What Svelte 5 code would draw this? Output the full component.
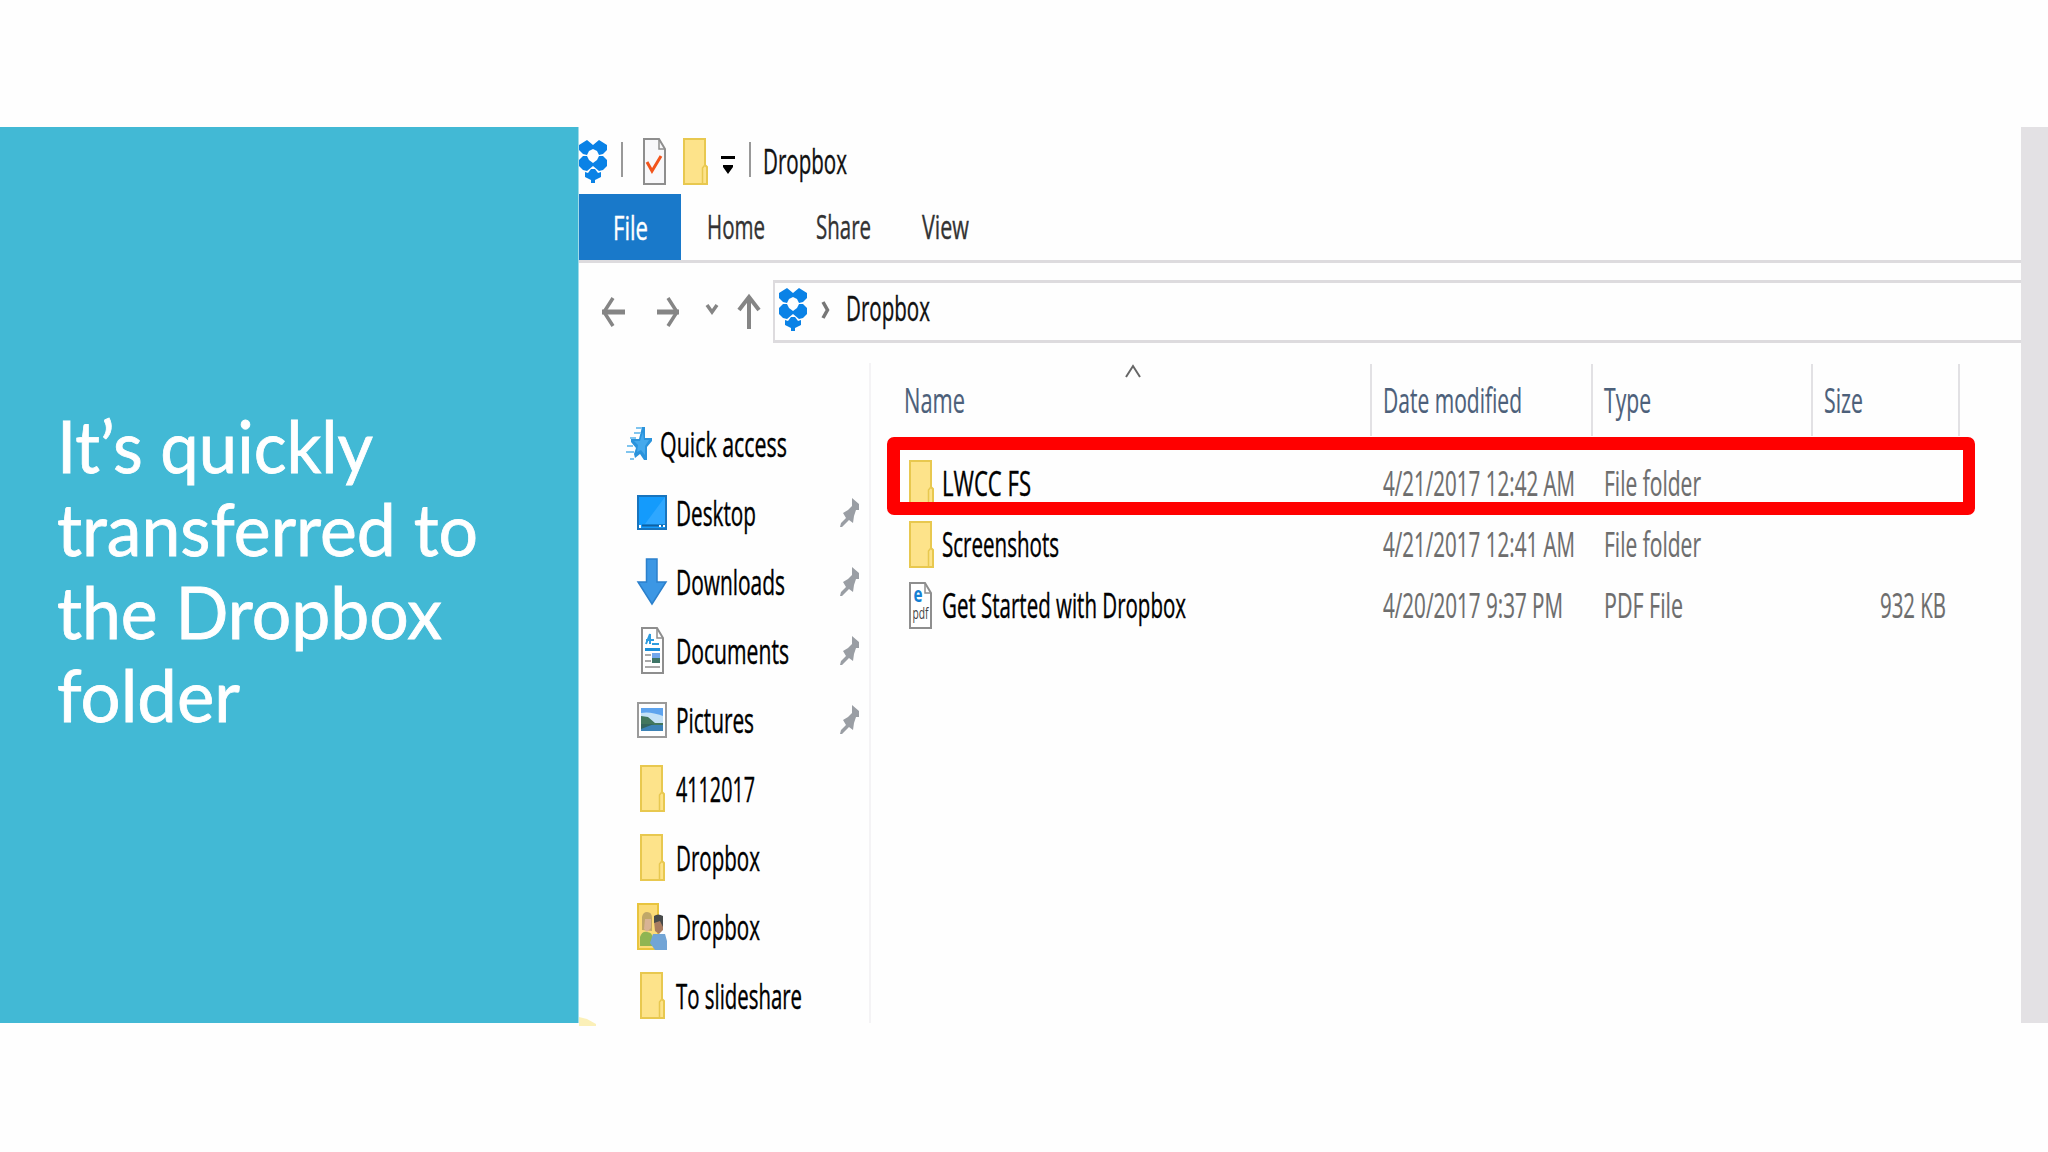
<script>
    const heading = [
        {text: 'It’s quickly', width: 316, indent: 0},
        {text: 'transferred to', width: 421, indent: 0},
        {text: 'the Dropbox', width: 385, indent: 0},
        {text: 'folder', width: 183, indent: 0}
    ];

    const tabs = [
        {text: 'Home', width: 58, space: 26},
        {text: 'Share', width: 55, space: 51},
        {text: 'View', width: 47, space: 51}
    ];

    const places = [
        {icon: 'desktop', text: 'Desktop', width: 80, pinned: true},
        {icon: 'download', text: 'Downloads', width: 109, pinned: true},
        {icon: 'document', text: 'Documents', width: 113, pinned: true},
        {icon: 'picture', text: 'Pictures', width: 78, pinned: true},
        {icon: 'folder', text: '4112017', width: 79},
        {icon: 'folder', text: 'Dropbox', width: 84},
        {icon: 'shared', text: 'Dropbox', width: 84},
        {icon: 'folder', text: 'To slideshare', width: 126}
    ];

    const columns = [
        {text: 'Name', width: 61, sorted: true},
        {text: 'Date modified', width: 139},
        {text: 'Type', width: 47},
        {text: 'Size', width: 39}
    ];

    const files = [
        {icon: 'folder', name: 'LWCC FS', nameWidth: 89, date: '4/21/2017 12:42 AM', dateWidth: 192, type: 'File folder', typeWidth: 97},
        {icon: 'folder', name: 'Screenshots', nameWidth: 117, date: '4/21/2017 12:41 AM', dateWidth: 192, type: 'File folder', typeWidth: 97},
        {icon: 'pdf', name: 'Get Started with Dropbox', nameWidth: 244, date: '4/20/2017 9:37 PM', dateWidth: 180, type: 'PDF File', typeWidth: 79, size: '932 KB', sizeWidth: 66}
    ];

    // squeeze the text horizontally into the given width
    const fit = (node, width) => {
        node.style.transform = `scaleX(${width / node.getBoundingClientRect().width})`;
    }
</script>

{#snippet label(text, width)}
    <span class="label" style:width="{width}px"><span class="squeeze" use:fit={width}>{text}</span></span>
{/snippet}

{#snippet dropbox()}
    <svg width="28" height="44" viewBox="0 0 28 44" fill="#0a82e6">
        <path d="M8 0 14 5V9L10 11 8 15 4 14 0 10V5Z" />
        <path d="M20 0 14 5V9L18 11 20 15 24 14 28 10V5Z" />
        <path d="M4 16 8 16 10 20 14 23V26L8 31 4 30 0 26V20Z" />
        <path d="M24 16 20 16 18 20 14 23V26L20 31 24 30 28 26V20Z" />
        <path d="M12 29H16L19 33 22 32V37L16 40V43H12V40L6 37V32L9 33Z" />
    </svg>
{/snippet}

{#snippet icon(name)}
    {#if name === 'folder'}
        <svg width="25" height="47" viewBox="0 0 25 47">
            <path d="M1 1H22V27L24 29V46H1Z" fill="#fde38a" stroke="#e8c84f" stroke-width="2" />
            <path d="M19.5 45V30L21.5 27.500" fill="none" stroke="#e8c84f" stroke-width="1.500" />
        </svg>
    {:else if name === 'desktop'}
        <svg width="30" height="35" viewBox="0 0 30 35">
            <path d="M1 1H29V34H1Z" fill="#149bfc" stroke="#1874bd" stroke-width="2" />
            <path d="M28 2V29H8Z" fill="#2ea7ff" />
            <path d="M5 29.500H28V31.500H5Z" fill="#12609f" />
            <path d="M2 30H4V33H2ZM22 30H24V32H22ZM26 30H28V32H26Z" fill="#fff" />
        </svg>
    {:else if name === 'download'}
        <svg width="30" height="47" viewBox="0 0 30 47">
            <path d="M9.500 1H20V24H29L15 46 1 24H9.500Z" fill="#3c97e4" stroke="#2b80cc" stroke-width="1.500" />
        </svg>
    {:else if name === 'document'}
        <svg width="23" height="47" viewBox="0 0 23 47">
            <path d="M1 1H16L22 11V46H1Z" fill="#fff" stroke="#8e8e8e" stroke-width="2" />
            <path d="M16 1V11H22" fill="none" stroke="#8e8e8e" stroke-width="1.500" />
            <path d="M5 17 9 7V17M5 13H13M11 17H18" fill="none" stroke="#2d9ce0" stroke-width="2" />
            <path d="M4 21H19V24H4Z" fill="#1c8fd8" />
            <path d="M4 28H10M4 34H10M4 40H19" stroke="#a8a8a8" stroke-width="2" />
            <path d="M11 26H19V31H11Z" fill="#72a7ec" />
            <path d="M11 31H19V36H11Z" fill="#3e7567" />
        </svg>
    {:else if name === 'picture'}
        <svg width="30" height="36" viewBox="0 0 30 36">
            <path d="M1 1H29V35H1Z" fill="#fff" stroke="#9a9a9a" stroke-width="2" />
            <path d="M4 6H26V29H4Z" fill="#5da3ee" />
            <path d="M4 11Q13 9 26 14V22H4Z" fill="#c3e1f7" />
            <path d="M4 14 11 15 18 21H26V23H4Z" fill="#42775e" />
            <path d="M4 23H26V29H4Z" fill="#3c83b7" />
            <path d="M4 22H17L4 27Z" fill="#35665d" />
        </svg>
    {:else if name === 'shared'}
        <svg width="30" height="47" viewBox="0 0 30 47">
            <path d="M1 1H21V46H1Z" fill="#fbdc78" stroke="#e8c43e" stroke-width="2" />
            <path d="M5 27V14Q6 9 10 9 15 9 15 15V28Z" fill="#c0a768" />
            <path d="M8 16H14V25L10 29 7 26Z" fill="#d8b394" />
            <path d="M3 43V34Q5 28 10 29 15 29 16 35V43Z" fill="#8fb552" />
            <path d="M17 18H26V27L22 31 18 28Z" fill="#a97c60" />
            <path d="M17 20V13Q21 10 26 13V24L23 18Z" fill="#484b4a" />
            <path d="M13 40 16 31 22 31 28 31 30 38V47H18Z" fill="#72a5d6" />
        </svg>
    {:else if name === 'pdf'}
        <svg class="pdf" width="23" height="47" viewBox="0 0 23 47">
            <path d="M1 1H16L22 11V46H1Z" fill="#fff" stroke="#8e8e8e" stroke-width="2" />
            <path d="M16 1V11H22" fill="none" stroke="#8e8e8e" stroke-width="1.500" />
            <text class="edge-letter" x="4.500" y="20" textLength="9" lengthAdjust="spacingAndGlyphs">e</text>
            <text class="pdf-letters" x="3.500" y="37" textLength="16" lengthAdjust="spacingAndGlyphs">pdf</text>
        </svg>
    {/if}
{/snippet}

<div class="slide">
    <div class="panel">
        <h1>
            {#each heading as line}
                <span class="line" style:padding-left="{line.indent}px">{@render label(line.text, line.width)}</span>
            {/each}
        </h1>
    </div>

    <div class="window">
        <div class="titlebar">
            {@render dropbox()}
            <i class="bar first"></i>
            <svg class="check" width="23" height="47" viewBox="0 0 23 47">
                <path d="M1 1H16L22 11V46H1Z" fill="#f8f8fa" stroke="#8e8e8e" stroke-width="2" />
                <path d="M16 1V11H22" fill="none" stroke="#8e8e8e" stroke-width="1.500" />
                <path d="M4 24 9 33 18 18" fill="none" stroke="#f2541b" stroke-width="3" />
            </svg>
            {@render icon('folder')}
            <svg class="menu" width="14" height="18" viewBox="0 0 14 18">
                <path d="M0 0H14V3H0ZM2 9H12V11L7 18 2 11Z" fill="#000" />
            </svg>
            <i class="bar second"></i>
            {@render label('Dropbox', 84)}
        </div>

        <div class="tabs">
            <div class="file">{@render label('File', 35)}</div>
            {#each tabs as tab}
                <div class="tab" style:margin-left="{tab.space}px">{@render label(tab.text, tab.width)}</div>
            {/each}
        </div>

        <div class="navigation">
            <svg class="arrows" width="160" height="36" viewBox="0 0 160 36" fill="none" stroke="#858585">
                <path d="M1 18H24" stroke-width="5" />
                <path d="M12 4 3 18 12 32" stroke-width="3.500" />
                <path d="M56 18H78" stroke-width="5" />
                <path d="M67 4 76 18 67 32" stroke-width="3.500" />
                <path d="M106 11 111 18 116 11" stroke-width="3.500" />
                <path d="M148 35V4" stroke-width="4" />
                <path d="M138 16 148 3 158 16" stroke-width="4" />
            </svg>
            <div class="address">
                {@render dropbox()}
                <svg class="crumb" width="10" height="20" viewBox="0 0 10 20">
                    <path d="M2 2 6.500 10 2 18" fill="none" stroke="#777" stroke-width="3.500" />
                </svg>
                {@render label('Dropbox', 84)}
            </div>
        </div>

        <div class="body">
            <div class="sidebar">
                <div class="place quick">
                    <svg width="28" height="36" viewBox="0 0 28 36">
                        <path d="M17 1H20V12H27V15L22 21V34H19L15 28 10 32 9 28 11 22 6 16V13H14Z" fill="#2a93dc" />
                        <path d="M18 6 19 14H24L20 20 20 29 16 24 12 26 13 19 9 15H15Z" fill="#45a9ec" />
                        <path d="M11 2H17M9 7H16M5 12H11M2 20H8M1 26H9M5 33H9" stroke="#80c5ef" stroke-width="2" />
                    </svg>
                    {@render label('Quick access', 127)}
                </div>
                {#each places as place}
                    <div class="place">
                        <span class="slot">{@render icon(place.icon)}</span>
                        {@render label(place.text, place.width)}
                        {#if place.pinned}
                            <svg class="pin" width="20" height="30" viewBox="0 0 20 30">
                                <path d="M12 0 19 6V12L16 12 14 18 13 25 9 22 2 29 0 29 1 25 6 20 3 15 8 12 12 8Z" fill="#9a9ea4" />
                            </svg>
                        {/if}
                    </div>
                {/each}
                <svg class="corner" width="17" height="10" viewBox="0 0 17 10">
                    <path d="M0 0 8 2 17 7V9H0Z" fill="#fbf0b8" />
                </svg>
            </div>

            <div class="list">
                <div class="row header">
                    {#each columns as column}
                        <div class="cell">
                            {@render label(column.text, column.width)}
                            {#if column.sorted}
                                <svg class="sort" width="16" height="14" viewBox="0 0 16 14">
                                    <path d="M1 13 8 2 15 13" fill="none" stroke="#666" stroke-width="2" />
                                </svg>
                            {/if}
                        </div>
                    {/each}
                </div>
                {#each files as file}
                    <div class="row">
                        <div class="cell name">
                            {@render icon(file.icon)}
                            {@render label(file.name, file.nameWidth)}
                        </div>
                        <div class="cell">{@render label(file.date, file.dateWidth)}</div>
                        <div class="cell">{@render label(file.type, file.typeWidth)}</div>
                        <div class="cell size">
                            {#if file.size}
                                {@render label(file.size, file.sizeWidth)}
                            {/if}
                        </div>
                    </div>
                {/each}
                <div class="highlight"></div>
            </div>
        </div>
    </div>

    <div class="strip"></div>
</div>

<style>
    :global(body) {
        margin: 0;
        background: #fefefe;
    }
    .slide {
        box-sizing: border-box;
        width: 2048px;
        height: 1152px;
        padding: 127px 0 129px;

        display: flex;
        overflow: hidden;

        background: #fefefe;
        font-family: 'Open Sans', 'Noto Sans', sans-serif;
        font-size: 34px;
        -webkit-text-stroke: 0.4px;
    }
    svg {
        display: block;
        flex: none;
        overflow: visible;
    }
    .label {
        display: inline-block;
        flex: none;
        white-space: nowrap;
    }
    .squeeze {
        display: inline-block;
        transform-origin: 0 50%;
    }

    .panel {
        width: 578px;
        flex: none;
        border-right: 1px solid #a0dbe9;
        background: #42b9d5;
    }
    h1 {
        margin: 277px 0 0 57px;

        color: #fff;
        font-family: Lato, 'Open Sans', sans-serif;
        font-size: 71px;
        font-weight: 400;
        line-height: 83px;
        -webkit-text-stroke: 0.8px;
    }
    .line {
        display: block;
        height: 83px;
    }

    .window {
        width: 1442px;
        flex: none;
        display: flex;
        flex-direction: column;
    }
    .titlebar {
        height: 67px;
        display: flex;
        align-items: center;
        color: #111;
    }
    .bar {
        width: 2px;
        height: 35px;
        margin-bottom: 2px;
        background: #999;
    }
    .first {
        margin-left: 14px;
        margin-right: 20px;
    }
    .check {
        margin-right: 17px;
    }
    .menu {
        margin: 9px 14px 0 13px;
    }
    .second {
        margin-right: 12px;
    }
    .titlebar, .navigation {
        line-height: 46px;
    }
    .titlebar svg:not(.menu) {
        margin-top: 2px;
    }

    .tabs {
        height: 66px;
        display: flex;
        align-items: center;

        border-bottom: 3px solid #dddbde;
        color: #333;
        font-size: 32.5px;
        line-height: 68px;
    }
    .file {
        width: 102px;
        height: 66px;
        display: flex;
        justify-content: center;

        background: #1979ca;
        color: #fff;
    }

    .navigation {
        height: 63px;
        margin-top: 17px;
        display: flex;
        align-items: center;
    }
    .arrows {
        margin-left: 22px;
    }
    .address {
        box-sizing: border-box;
        flex: 1;
        height: 63px;
        margin-left: 12px;
        padding-left: 4px;
        display: flex;
        align-items: center;

        border: 3px solid #dddbde;
        border-left-width: 2px;
        border-right: none;
        color: #111;
        line-height: 46px;
    }
    .address svg {
        margin-top: -3px;
    }
    .address .label {
        margin-top: -7px;
    }
    .address .crumb {
        margin: -3px 15px 0 14px;
    }

    .body {
        height: 680px;
        display: flex;
    }
    .sidebar {
        box-sizing: border-box;
        position: relative;
        width: 292px;
        height: 660px;
        margin-top: 20px;
        padding-top: 46px;
        border-right: 2px solid #f4f3f5;
        color: #000;
    }
    .place {
        box-sizing: border-box;
        height: 69px;
        padding: 0 9px 0 58px;
        display: flex;
        align-items: center;
        line-height: 70px;
    }
    .quick {
        padding-left: 46px;
        gap: 7px;
    }
    .slot {
        width: 30px;
        margin-right: 9px;
        display: flex;
        justify-content: center;
    }
    .pin {
        margin-left: auto;
    }
    .corner {
        position: absolute;
        left: 0;
        bottom: -4px;
    }

    .list {
        position: relative;
        flex: 1;
        padding-top: 21px;
    }
    .row {
        height: 61px;
        display: grid;
        grid-template-columns: 501px 221px 220px 147px;
        color: #6d6d6d;
        line-height: 62px;
        -webkit-text-stroke: 0.2px;
    }
    .cell {
        box-sizing: border-box;
        position: relative;
        padding-left: 11px;
        display: flex;
        align-items: center;
    }
    .header {
        height: 72px;
        margin-bottom: 16px;
        color: #4c607a;
        line-height: 70px;
    }
    .header .cell {
        border-right: 2px solid #e2e1e4;
    }
    .header .cell:first-child {
        padding-left: 33px;
    }
    .name {
        padding-left: 38px;
        gap: 8px;
        color: #000;
        -webkit-text-stroke: 0.4px;
    }
    .pdf {
        margin-right: 2px;
    }
    .size {
        padding-right: 14px;
        justify-content: flex-end;
    }
    .sort {
        position: absolute;
        top: 0;
        left: 254px;
    }
    .highlight {
        box-sizing: border-box;
        position: absolute;
        left: 16px;
        top: 94px;
        width: 1088px;
        height: 78px;
        border: 13px solid #f00;
        border-right-width: 12px;
        border-radius: 7px;
    }
    .edge-letter {
        fill: #1580d3;
        font-size: 22px;
        font-weight: 700;
        line-height: 1;
    }
    .pdf-letters {
        fill: #444;
        font-size: 17px;
        line-height: 1;
    }

    .strip {
        width: 27px;
        flex: none;
        background: #e3e1e4;
    }
</style>
